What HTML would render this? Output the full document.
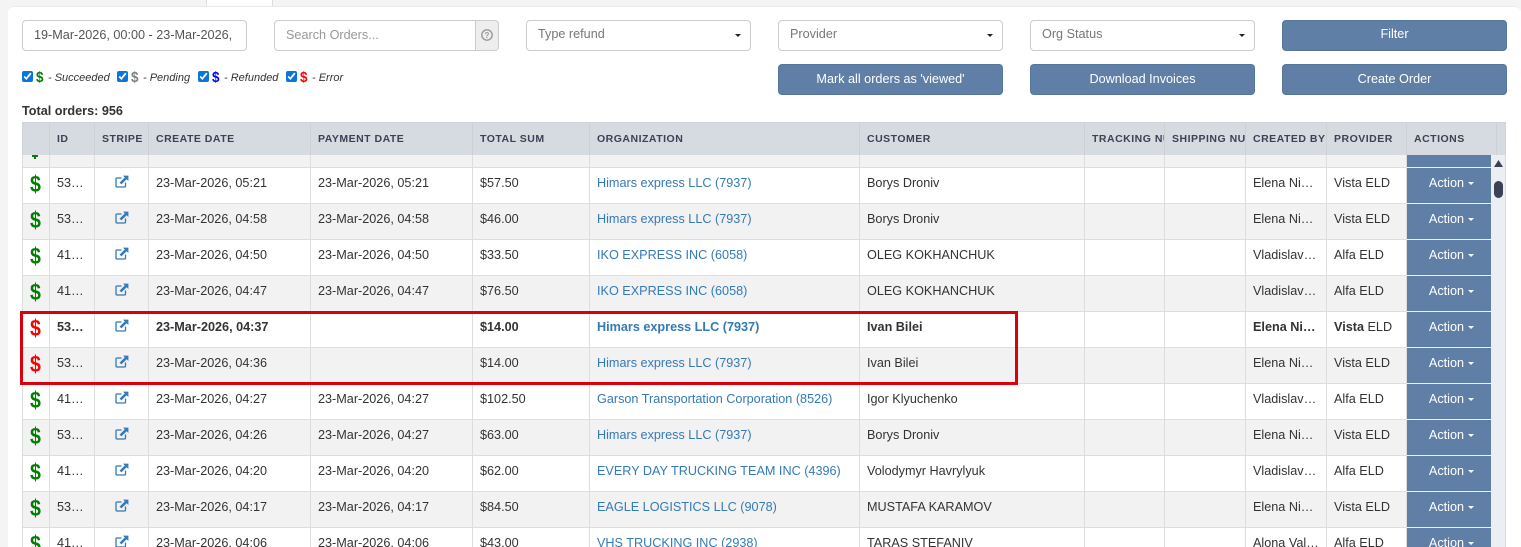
<!DOCTYPE html>
<html><head><meta charset="utf-8"><title>Orders</title>
<style>
html,body{margin:0;padding:0;background:#f4f4f4;overflow:hidden;width:1521px;height:547px}
#root{position:absolute;left:0;top:0;width:1521px;height:547px;overflow:hidden;font:12.65px "Liberation Sans",Arial,sans-serif;color:#333}
.abs{position:absolute;box-sizing:border-box}
.panel{left:8px;top:6px;width:1513px;height:541px;background:#fff;border-top:1px solid #e8ecf1;border-radius:6px 6px 0 0}
.tab{left:206px;top:0;width:67px;height:6px;background:#fff;border:1px solid #ddd;border-width:0 1px}
.inp{height:31px;top:20px;background:#fff;border:1px solid #ccc;border-radius:4px;line-height:28px;padding-left:11px;color:#555;overflow:hidden;white-space:nowrap}
.sel{color:#777;line-height:25px}
.sel i{position:absolute;right:9px;top:13px;width:0;height:0;border:3.5px solid transparent;border-top:3.5px solid #222;border-bottom:0}
.btn{height:31px;width:225px;background:#5f7fa6;border:1px solid #55759b;border-radius:4px;color:#fff;text-align:center;line-height:27px}
.leg{top:70px;height:16px;line-height:15px;font-size:11px;font-style:italic;white-space:nowrap}
.leg input{position:absolute;left:0;top:1px;margin:0;width:11px;height:11px;accent-color:#0b76d8}
.leg b{position:absolute;left:14px;top:0;font:bold 15px/16px "Liberation Sans",sans-serif;font-style:normal;transform:scaleX(.9);transform-origin:0 0}
.leg span{position:absolute;left:26px;top:1px}
table{border-collapse:separate;border-spacing:0;table-layout:fixed}
.h{left:22px;top:122px;width:1484px;height:33px;background:#d6dae1;border:1px solid #cfd3d9;border-bottom:0}
.h div{position:absolute;top:0;height:32px;border-right:1px solid #cdd0d5;font:bold 10.5px/32px "Liberation Sans",sans-serif;letter-spacing:.5px;color:#3b4256;padding-left:7px;box-sizing:border-box;overflow:hidden;white-space:nowrap}
.wrap{left:22px;top:155px;width:1469px;height:392px;overflow:hidden;border-left:1px solid #ddd}
.wrap table{width:1468px}
td{box-sizing:border-box;height:36px;padding:7px 7px 0;vertical-align:top;line-height:17px;border-right:1px solid #ddd;border-bottom:1px solid #ddd;overflow:hidden;white-space:nowrap;background:#fff}
tr:nth-child(odd) td{background:#f2f2f2}
tr.top td{height:13px;padding:0;line-height:0}
td.d,tr.b td.d{padding:0;text-align:center;font:bold 23px/33px "Liberation Sans",sans-serif;color:#008000}
td.d span{display:inline-block;transform:translateX(-1px) scaleX(.85)}
tr td.r,tr.b td.r{color:#f00}
td.x{padding:0}
td.x svg{display:block;margin:7px 0 0 20px}
td.o{color:#337ab7}
tr.b td{font-weight:bold}
tr.b td.n span{font-weight:normal}
tr td.a,tr.b td.a{padding:0 0 0 5px;background:#5f7fa6;border-right:0;border-bottom:1px solid #eef1f4;color:#fff;text-align:center;line-height:31px;font-weight:normal}
td.a i{display:inline-block;vertical-align:2px;margin-left:4px;border:3px solid transparent;border-top:3px solid #fff;border-bottom:0}
.track{left:1491px;top:155px;width:15px;height:392px;background:#ebeef2;border-right:1px solid #d6dae1}
</style></head><body><div id="root">
<svg width="0" height="0" style="position:absolute"><symbol id="ext" viewBox="0 0 14 13"><path d="M10.5 7.5V11a1 1 0 0 1-1 1H2a1 1 0 0 1-1-1V4a1 1 0 0 1 1-1h4.5" fill="none" stroke="#337ab7" stroke-width="1.3"/><path d="M8 .6h5.4V6L11.6 4.2 6.4 9.4 4.6 7.6 9.8 2.4Z" fill="#337ab7"/></symbol></svg>
<div class="abs panel"></div>
<div class="abs tab"></div>

<div class="abs inp" style="left:22px;width:225px"><div style="width:202px;overflow:hidden">19-Mar-2026, 00:00 - 23-Mar-2026, 23:59</div></div>
<div class="abs inp" style="left:274px;width:202px;border-radius:4px 0 0 4px;color:#999">Search Orders...</div>
<div class="abs" style="left:475px;top:20px;width:24px;height:31px;background:#eee;border:1px solid #ccc;border-radius:0 4px 4px 0">
<svg width="14" height="14" viewBox="0 0 14 14" style="position:absolute;left:4px;top:7px"><circle cx="7" cy="7" r="5.2" fill="none" stroke="#999" stroke-width="1.4"/><text x="7" y="10" font-size="8" font-weight="bold" text-anchor="middle" fill="#999" font-family="Liberation Sans">?</text></svg></div>
<div class="abs inp sel" style="left:526px;width:225px;line-height:27px">Type refund<i></i></div>
<div class="abs inp sel" style="left:778px;width:225px;line-height:27px">Provider<i></i></div>
<div class="abs inp sel" style="left:1030px;width:225px;line-height:27px">Org Status<i></i></div>
<div class="abs btn" style="left:1282px;top:20px">Filter</div>
<div class="abs btn" style="left:778px;top:64px;line-height:28px">Mark all orders as 'viewed'</div>
<div class="abs btn" style="left:1030px;top:64px;line-height:28px">Download Invoices</div>
<div class="abs btn" style="left:1282px;top:64px;line-height:28px">Create Order</div>

<div class="abs leg" style="left:22px;width:90px"><input type="checkbox" checked><b style="color:#008000">$</b><span>- Succeeded</span></div>
<div class="abs leg" style="left:117px;width:80px"><input type="checkbox" checked><b style="color:#808080">$</b><span>- Pending</span></div>
<div class="abs leg" style="left:198px;width:85px"><input type="checkbox" checked><b style="color:#00f">$</b><span>- Refunded</span></div>
<div class="abs leg" style="left:286px;width:65px"><input type="checkbox" checked><b style="color:#f00">$</b><span>- Error</span></div>
<div class="abs" style="left:22px;top:104px;font-weight:bold;line-height:15px">Total orders: 956</div>

<div class="abs h">
<div style="left:0;width:27px"></div>
<div style="left:27px;width:45px">ID</div>
<div style="left:72px;width:54px">STRIPE</div>
<div style="left:126px;width:162px">CREATE DATE</div>
<div style="left:288px;width:162px">PAYMENT DATE</div>
<div style="left:450px;width:117px">TOTAL SUM</div>
<div style="left:567px;width:270px">ORGANIZATION</div>
<div style="left:837px;width:225px">CUSTOMER</div>
<div style="left:1062px;width:80px">TRACKING NUMBER</div>
<div style="left:1142px;width:81px">SHIPPING NUMBER</div>
<div style="left:1223px;width:81px">CREATED BY</div>
<div style="left:1304px;width:80px">PROVIDER</div>
<div style="left:1384px;width:90px">ACTIONS</div>
</div>

<div class="abs wrap">
<table>
<colgroup><col style="width:27px"><col style="width:45px"><col style="width:54px"><col style="width:162px"><col style="width:162px"><col style="width:117px"><col style="width:270px"><col style="width:225px"><col style="width:80px"><col style="width:81px"><col style="width:81px"><col style="width:80px"><col style="width:84px"></colgroup>
<tbody>
<tr class="top"><td></td><td></td><td></td><td></td><td></td><td></td><td></td><td></td><td></td><td></td><td></td><td></td><td class="a"></td></tr>
<tr><td class="d"><span>$</span></td><td>53…</td><td class="x"><svg width="14" height="13"><use href="#ext"/></svg></td><td>23-Mar-2026, 05:21</td><td>23-Mar-2026, 05:21</td><td>$57.50</td><td class="o">Himars express LLC (7937)</td><td>Borys Droniv</td><td></td><td></td><td>Elena Ni…</td><td>Vista ELD</td><td class="a">Action<i></i></td></tr>
<tr><td class="d"><span>$</span></td><td>53…</td><td class="x"><svg width="14" height="13"><use href="#ext"/></svg></td><td>23-Mar-2026, 04:58</td><td>23-Mar-2026, 04:58</td><td>$46.00</td><td class="o">Himars express LLC (7937)</td><td>Borys Droniv</td><td></td><td></td><td>Elena Ni…</td><td>Vista ELD</td><td class="a">Action<i></i></td></tr>
<tr><td class="d"><span>$</span></td><td>41…</td><td class="x"><svg width="14" height="13"><use href="#ext"/></svg></td><td>23-Mar-2026, 04:50</td><td>23-Mar-2026, 04:50</td><td>$33.50</td><td class="o">IKO EXPRESS INC (6058)</td><td>OLEG KOKHANCHUK</td><td></td><td></td><td>Vladislav…</td><td>Alfa ELD</td><td class="a">Action<i></i></td></tr>
<tr><td class="d"><span>$</span></td><td>41…</td><td class="x"><svg width="14" height="13"><use href="#ext"/></svg></td><td>23-Mar-2026, 04:47</td><td>23-Mar-2026, 04:47</td><td>$76.50</td><td class="o">IKO EXPRESS INC (6058)</td><td>OLEG KOKHANCHUK</td><td></td><td></td><td>Vladislav…</td><td>Alfa ELD</td><td class="a">Action<i></i></td></tr>
<tr class="b"><td class="d r"><span>$</span></td><td>53…</td><td class="x"><svg width="14" height="13"><use href="#ext"/></svg></td><td>23-Mar-2026, 04:37</td><td></td><td>$14.00</td><td class="o">Himars express LLC (7937)</td><td>Ivan Bilei</td><td></td><td></td><td>Elena Ni…</td><td class="n">Vista <span>ELD</span></td><td class="a">Action<i></i></td></tr>
<tr><td class="d r"><span>$</span></td><td>53…</td><td class="x"><svg width="14" height="13"><use href="#ext"/></svg></td><td>23-Mar-2026, 04:36</td><td></td><td>$14.00</td><td class="o">Himars express LLC (7937)</td><td>Ivan Bilei</td><td></td><td></td><td>Elena Ni…</td><td>Vista ELD</td><td class="a">Action<i></i></td></tr>
<tr><td class="d"><span>$</span></td><td>41…</td><td class="x"><svg width="14" height="13"><use href="#ext"/></svg></td><td>23-Mar-2026, 04:27</td><td>23-Mar-2026, 04:27</td><td>$102.50</td><td class="o">Garson Transportation Corporation (8526)</td><td>Igor Klyuchenko</td><td></td><td></td><td>Vladislav…</td><td>Alfa ELD</td><td class="a">Action<i></i></td></tr>
<tr><td class="d"><span>$</span></td><td>53…</td><td class="x"><svg width="14" height="13"><use href="#ext"/></svg></td><td>23-Mar-2026, 04:26</td><td>23-Mar-2026, 04:27</td><td>$63.00</td><td class="o">Himars express LLC (7937)</td><td>Borys Droniv</td><td></td><td></td><td>Elena Ni…</td><td>Vista ELD</td><td class="a">Action<i></i></td></tr>
<tr><td class="d"><span>$</span></td><td>41…</td><td class="x"><svg width="14" height="13"><use href="#ext"/></svg></td><td>23-Mar-2026, 04:20</td><td>23-Mar-2026, 04:20</td><td>$62.00</td><td class="o">EVERY DAY TRUCKING TEAM INC (4396)</td><td>Volodymyr Havrylyuk</td><td></td><td></td><td>Vladislav…</td><td>Alfa ELD</td><td class="a">Action<i></i></td></tr>
<tr><td class="d"><span>$</span></td><td>53…</td><td class="x"><svg width="14" height="13"><use href="#ext"/></svg></td><td>23-Mar-2026, 04:17</td><td>23-Mar-2026, 04:17</td><td>$84.50</td><td class="o">EAGLE LOGISTICS LLC (9078)</td><td>MUSTAFA KARAMOV</td><td></td><td></td><td>Elena Ni…</td><td>Vista ELD</td><td class="a">Action<i></i></td></tr>
<tr><td class="d"><span>$</span></td><td>41…</td><td class="x"><svg width="14" height="13"><use href="#ext"/></svg></td><td>23-Mar-2026, 04:06</td><td>23-Mar-2026, 04:06</td><td>$43.00</td><td class="o">VHS TRUCKING INC (2938)</td><td>TARAS STEFANIV</td><td></td><td></td><td>Alona Val…</td><td>Alfa ELD</td><td class="a">Action<i></i></td></tr>
</tbody></table>
</div>

<div class="abs" style="left:31px;top:155px;width:8px;height:4px;overflow:hidden"><div style="position:absolute;left:3px;top:0;width:2px;height:4px;background:#008000"></div><div style="position:absolute;left:1px;top:0;width:6px;height:2px;background:#008000"></div></div>

<div class="abs track"></div>
<svg class="abs" style="left:1491px;top:155px" width="15" height="50" viewBox="0 0 15 50"><path d="M3 12 7.5 5 12 12Z" fill="#3b4256"/><rect x="3" y="26" width="9" height="17" rx="4.5" fill="#3b4256"/></svg>

<div class="abs" style="left:20px;top:311px;width:998px;height:74px;border:3px solid #d9000d"></div>
</div></body></html>
